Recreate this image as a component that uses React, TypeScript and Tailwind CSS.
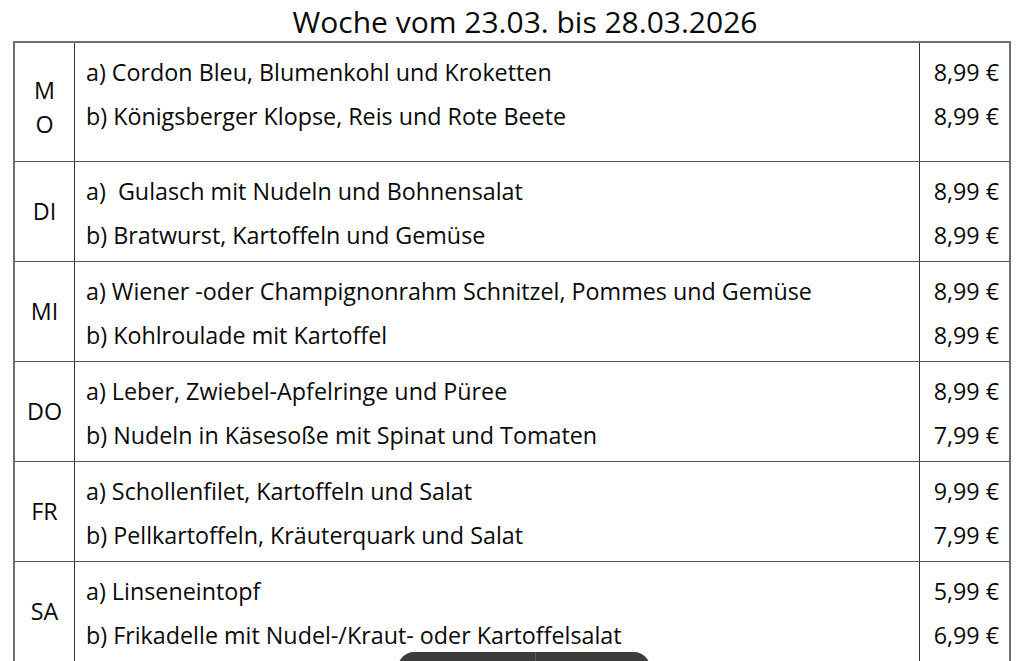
import React from 'react';

type Day = {
  label: string;
  items: { text: string; price: string }[];
  tall?: boolean;
};

const days: Day[] = [
  {
    label: 'MO',
    tall: true,
    items: [
      { text: 'a) Cordon Bleu, Blumenkohl und Kroketten', price: '8,99 €' },
      { text: 'b) Königsberger Klopse, Reis und Rote Beete', price: '8,99 €' },
    ],
  },
  {
    label: 'DI',
    items: [
      { text: 'a)  Gulasch mit Nudeln und Bohnensalat', price: '8,99 €' },
      { text: 'b) Bratwurst, Kartoffeln und Gemüse', price: '8,99 €' },
    ],
  },
  {
    label: 'MI',
    items: [
      { text: 'a) Wiener -oder Champignonrahm Schnitzel, Pommes und Gemüse', price: '8,99 €' },
      { text: 'b) Kohlroulade mit Kartoffel', price: '8,99 €' },
    ],
  },
  {
    label: 'DO',
    items: [
      { text: 'a) Leber, Zwiebel-Apfelringe und Püree', price: '8,99 €' },
      { text: 'b) Nudeln in Käsesoße mit Spinat und Tomaten', price: '7,99 €' },
    ],
  },
  {
    label: 'FR',
    items: [
      { text: 'a) Schollenfilet, Kartoffeln und Salat', price: '9,99 €' },
      { text: 'b) Pellkartoffeln, Kräuterquark und Salat', price: '7,99 €' },
    ],
  },
  {
    label: 'SA',
    items: [
      { text: 'a) Linseneintopf', price: '5,99 €' },
      { text: 'b) Frikadelle mit Nudel-/Kraut- oder Kartoffelsalat', price: '6,99 €' },
    ],
  },
];

const DayRow: React.FC<{ day: Day }> = ({ day }) => (
  <div
    className={`flex border-b border-[#555] ${day.tall ? 'h-[119px]' : 'h-[100px]'}`}
  >
    {/* Tag */}
    <div className="w-[60px] shrink-0 flex items-center justify-center border-r border-[#333]">
      {day.label === 'MO' ? (
        <span className="w-[22px] text-center break-all leading-[34px] mt-[10px]">MO</span>
      ) : (
        <span className="leading-none">{day.label}</span>
      )}
    </div>
    {/* Gerichte */}
    <div className="flex-1 pl-[11px] pt-[7px]">
      {day.items.map((it, i) => (
        <div key={i} className="leading-[44px] whitespace-pre">
          {it.text}
        </div>
      ))}
    </div>
    {/* Preise */}
    <div className="w-[90px] shrink-0 border-l border-[#333] pt-[7px] pr-[10px] text-right">
      {day.items.map((it, i) => (
        <div key={i} className="leading-[44px]">
          {it.price}
        </div>
      ))}
    </div>
  </div>
);

export default function App() {
  return (
    <div
      className="relative h-[661px] w-[1024px] overflow-hidden bg-white text-[#0a0a0a]"
      style={{ fontFamily: '"Open Sans", "Noto Sans", sans-serif' }}
    >
      <div className="h-[41px] pl-[26px] flex justify-center items-start">
        <h1 className="text-[30px] leading-[43px] font-normal">Woche vom 23.03. bis 28.03.2026</h1>
      </div>

      <div className="ml-[13px] w-[998px] border-x-2 border-t-2 border-[#6f6f6f] text-[23.3px]">
        {days.map((d) => (
          <DayRow key={d.label} day={d} />
        ))}
      </div>

      {/* PDF-Toolbar unten */}
      <div className="absolute left-[398px] top-[652px] flex h-[40px] w-[252px] overflow-hidden rounded-[16px] bg-[#3c3c3c]">
        <div className="w-[138px] border-r border-[#5a5a5a]" />
        <div className="flex-1" />
      </div>
    </div>
  );
}
